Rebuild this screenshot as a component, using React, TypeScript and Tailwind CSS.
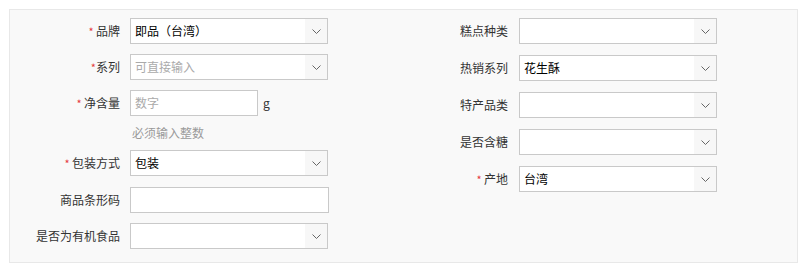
import React from 'react';

const FONT = '[font-family:"Noto_Sans_CJK_SC","Liberation_Sans",sans-serif]';

function Chevron() {
	return (
		<svg width="9" height="5" viewBox="0 0 9 5" fill="none">
			<path d="M0.5 0.5 L4.5 4.5 L8.5 0.5" stroke="#666" strokeWidth="1" />
		</svg>
	);
}

function Label({ text, required, gap = true, width }: { text: string; required?: boolean; gap?: boolean; width: string }) {
	return (
		<div className={`${width} shrink-0 text-right text-[12px] text-[#333] leading-[26px]`}>
			{required && <span className="text-[#e5393c] text-[11px]">*{gap ? '\u00a0' : ''}</span>}
			{text}
		</div>
	);
}

function Select({ value, placeholder }: { value?: string; placeholder?: string }) {
	return (
		<div className="flex h-[26px] w-[198px] border border-[#c9c9c9] bg-white">
			<div className={`flex-1 pl-[4px] text-[12px] leading-[24px] ${value ? 'text-black' : 'text-[#aaa]'}`}>
				{value ?? placeholder ?? ''}
			</div>
			<div className="flex w-[22px] items-center justify-center bg-[#f7f7f7]">
				<Chevron />
			</div>
		</div>
	);
}

function Input({ width, placeholder }: { width: string; placeholder?: string }) {
	return (
		<div className={`h-[26px] ${width} border border-[#c9c9c9] bg-white pl-[4px] text-[12px] leading-[24px] text-[#aaa]`}>
			{placeholder}
		</div>
	);
}

export default function App() {
	return (
		<div className={`h-[267px] w-[800px] bg-white pl-[9px] pt-[9px] ${FONT}`}>
			<div className="flex h-[254px] w-[789px] border border-[#e8e8e8] bg-[#f9f9f9] pt-[8px]">
				{/* left column */}
				<div className="flex w-[390px] flex-col">
					<div className="flex">
						<Label width="w-[110px]" text="品牌" required />
						<div className="ml-[10px]"><Select value="即品（台湾）" /></div>
					</div>
					<div className="mt-[10px] flex">
						<Label width="w-[110px]" text="系列" required gap={false} />
						<div className="ml-[10px]"><Select placeholder="可直接输入" /></div>
					</div>
					<div className="mt-[10px] flex">
						<Label width="w-[110px]" text="净含量" required />
						<div className="ml-[10px] flex items-center">
							<Input width="w-[128px]" placeholder="数字" />
							<span className="ml-[5px] text-[12px] text-[#333]">g</span>
						</div>
					</div>
					<div className="mt-[10px] h-[14px] pl-[122px] text-[12px] leading-[14px] text-[#999]">必须输入整数</div>
					<div className="mt-[10px] flex">
						<Label width="w-[110px]" text="包装方式" required />
						<div className="ml-[10px]"><Select value="包装" /></div>
					</div>
					<div className="mt-[11px] flex">
						<Label width="w-[110px]" text="商品条形码" />
						<div className="ml-[10px]"><Input width="w-[199px]" /></div>
					</div>
					<div className="mt-[10px] flex">
						<Label width="w-[110px]" text="是否为有机食品" />
						<div className="ml-[10px]"><Select /></div>
					</div>
				</div>
				{/* right column */}
				<div className="flex flex-col gap-[11px]">
					<div className="flex">
						<Label width="w-[108px]" text="糕点种类" />
						<div className="ml-[11px]"><Select /></div>
					</div>
					<div className="flex">
						<Label width="w-[108px]" text="热销系列" />
						<div className="ml-[11px]"><Select value="花生酥" /></div>
					</div>
					<div className="flex">
						<Label width="w-[108px]" text="特产品类" />
						<div className="ml-[11px]"><Select /></div>
					</div>
					<div className="flex">
						<Label width="w-[108px]" text="是否含糖" />
						<div className="ml-[11px]"><Select /></div>
					</div>
					<div className="flex">
						<Label width="w-[108px]" text="产地" required />
						<div className="ml-[11px]"><Select value="台湾" /></div>
					</div>
				</div>
			</div>
		</div>
	);
}
